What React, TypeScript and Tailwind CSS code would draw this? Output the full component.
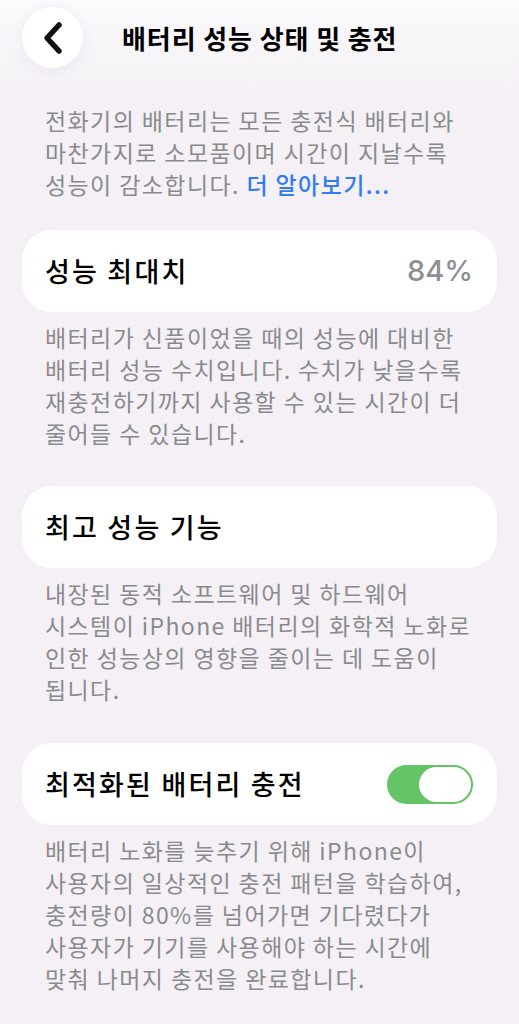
import { useState } from 'react';

const FONT = "font-['Noto_Sans_CJK_KR','Noto_Sans',sans-serif]";

function BackButton() {
  return (
    <button
      type="button"
      aria-label="뒤로"
      className="flex h-[61px] w-[61px] shrink-0 items-center justify-center rounded-full bg-white shadow-[0_2px_14px_rgba(80,60,110,0.08)]"
    >
      <svg width="24" height="34" viewBox="0 0 24 34" fill="none">
        <path d="M18 4 L6 17 L18 30" stroke="#111" strokeWidth="5.5" strokeLinecap="round" strokeLinejoin="round" />
      </svg>
    </button>
  );
}

function Toggle({ on, onChange }: { on: boolean; onChange: (v: boolean) => void }) {
  return (
    <button
      type="button"
      role="switch"
      aria-checked={on}
      onClick={() => onChange(!on)}
      className={`flex h-[39px] w-[86px] items-center rounded-full p-[2px] ${on ? 'justify-end bg-[#65c466]' : 'justify-start bg-[#e5e5ea]'}`}
    >
      <span className="block h-[35px] w-[52px] rounded-full bg-white" />
    </button>
  );
}

function Row({ label, children }: { label: string; children?: React.ReactNode }) {
  return (
    <div className="flex h-[82px] items-center justify-between rounded-[30px] bg-white pl-[23px] pr-[24px]">
      <span className="text-[27px] font-medium tracking-[2.2px] text-black">{label}</span>
      {children}
    </div>
  );
}

function Note({ children }: { children: React.ReactNode }) {
  return (
    <p className="px-[45px] text-[23px] leading-[32px] tracking-[1.4px] text-[#8a8a8e]">{children}</p>
  );
}

export default function App() {
  const [optimized, setOptimized] = useState(true);

  return (
    <div className={`${FONT} min-h-[1024px] w-full bg-[#f4f0f5]`}>
      <header className="flex items-center gap-[39px] bg-gradient-to-b from-[#fbfafc] to-[#f4f0f5] px-[22px] pb-[36px] pt-[7px]">
        <BackButton />
        <h1 className="text-[26px] font-bold tracking-[0.9px] text-black">배터리 성능 상태 및 충전</h1>
      </header>

      <Note>
        전화기의 배터리는 모든 충전식 배터리와
        <br />
        마찬가지로 소모품이며 시간이 지날수록
        <br />
        성능이 감소합니다. <span className="font-medium text-[#2f7cf6]">더 알아보기...</span>
      </Note>

      <div className="mt-[30px] px-[22px]">
        <Row label="성능 최대치">
          <span className="font-['Inter',sans-serif] text-[29px] font-medium text-[#8e8e93]">84%</span>
        </Row>
      </div>
      <div className="mt-[9px]">
        <Note>
          배터리가 신품이었을 때의 성능에 대비한
          <br />
          배터리 성능 수치입니다. 수치가 낮을수록
          <br />
          재충전하기까지 사용할 수 있는 시간이 더
          <br />
          줄어들 수 있습니다.
        </Note>
      </div>

      <div className="mt-[37px] px-[22px]">
        <Row label="최고 성능 기능" />
      </div>
      <div className="mt-[9px]">
        <Note>
          내장된 동적 소프트웨어 및 하드웨어
          <br />
          시스템이 iPhone 배터리의 화학적 노화로
          <br />
          인한 성능상의 영향을 줄이는 데 도움이
          <br />
          됩니다.
        </Note>
      </div>

      <div className="mt-[38px] px-[22px]">
        <Row label="최적화된 배터리 충전">
          <Toggle on={optimized} onChange={setOptimized} />
        </Row>
      </div>
      <div className="mt-[9px]">
        <Note>
          배터리 노화를 늦추기 위해 iPhone이
          <br />
          사용자의 일상적인 충전 패턴을 학습하여,
          <br />
          충전량이 80%를 넘어가면 기다렸다가
          <br />
          사용자가 기기를 사용해야 하는 시간에
          <br />
          맞춰 나머지 충전을 완료합니다.
        </Note>
      </div>
    </div>
  );
}
